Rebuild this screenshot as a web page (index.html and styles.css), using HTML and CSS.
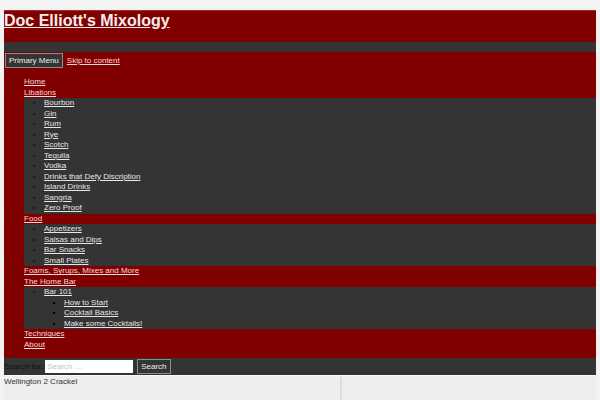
FILE: index.html
```html
<!DOCTYPE html>
<html lang="en">
<head>
<meta charset="utf-8">
<title>Doc Elliott's Mixology</title>
<link rel="stylesheet" href="styles.css">
</head>
<body>
<div class="page">
  <header class="site-header">
    <h1 class="site-title"><a href="#">Doc Elliott's Mixology</a></h1>
  </header>
  <div class="header-bar"></div>
  <nav class="main-nav">
    <div class="nav-top">
      <button class="menu-toggle">Primary Menu</button>
      <a class="skip-link" href="#">Skip to content</a>
    </div>
    <ul class="menu">
      <li><a href="#">Home</a></li>
      <li><a href="#">Libations</a>
        <ul class="sub-menu">
          <li><a href="#">Bourbon</a></li>
          <li><a href="#">Gin</a></li>
          <li><a href="#">Rum</a></li>
          <li><a href="#">Rye</a></li>
          <li><a href="#">Scotch</a></li>
          <li><a href="#">Tequila</a></li>
          <li><a href="#">Vodka</a></li>
          <li><a href="#">Drinks that Defy Discription</a></li>
          <li><a href="#">Island Drinks</a></li>
          <li><a href="#">Sangria</a></li>
          <li><a href="#">Zero Proof</a></li>
        </ul>
      </li>
      <li><a href="#">Food</a>
        <ul class="sub-menu">
          <li><a href="#">Appetizers</a></li>
          <li><a href="#">Salsas and Dips</a></li>
          <li><a href="#">Bar Snacks</a></li>
          <li><a href="#">Small Plates</a></li>
        </ul>
      </li>
      <li><a href="#">Foams, Syrups, Mixes and More</a></li>
      <li><a href="#">The Home Bar</a>
        <ul class="sub-menu">
          <li><a href="#">Bar 101</a>
            <ul class="sub-sub-menu">
              <li><a href="#">How to Start</a></li>
              <li><a href="#">Cocktail Basics</a></li>
              <li><a href="#">Make some Cocktails!</a></li>
            </ul>
          </li>
        </ul>
      </li>
      <li><a href="#">Techniques</a></li>
      <li><a href="#">About</a></li>
    </ul>
  </nav>
  <form class="search-bar">
    <label class="search-label" for="s">Search for:</label>
    <input class="search-input" id="s" type="search" placeholder="Search …">
    <button class="search-btn" type="button">Search</button>
  </form>
  <main class="content">
    <div class="col-main">Wellington 2 Crackel</div>
    <div class="col-side"></div>
  </main>
</div>
</body>
</html>
```
FILE: styles.css
```css
html, body {
  margin: 0;
  padding: 0;
}
body {
  background: #f3f3f3;
  font-family: "Liberation Sans", Arial, sans-serif;
  font-size: 8px;
}
.page {
  margin: 10px 4px 0 4px;
}
.site-header {
  background: #800000;
  border-top: 1px solid #9c3030;
  height: 31px;
}
.site-title {
  margin: 0;
  padding-top: 1px;
  font-size: 16px;
  line-height: 18px;
  font-weight: bold;
}
.site-title a {
  color: #f6ecec;
  text-decoration: underline;
}
.header-bar {
  height: 10px;
  background: #343434;
}
.main-nav {
  display: flow-root;
  background: #800000;
  padding-top: 1px;
}
.nav-top {
  display: flex;
  align-items: center;
  gap: 4px;
  margin-left: 1px;
  height: 15px;
}
.menu-toggle {
  font-family: "Liberation Sans", Arial, sans-serif;
  font-size: 8px;
  font-weight: normal;
  height: 15px;
  line-height: 13px;
  padding: 0 3px;
  margin: 0;
  background: #343434;
  color: #eeeeee;
  border: 1px solid #8c8c8c;
  border-radius: 0;
}
.skip-link {
  color: #f3d6d6;
  font-size: 8px;
}
.menu {
  margin: 9px 0 8px 0;
  padding-left: 20px;
  list-style: disc;
  line-height: 10.52px;
  color: #1a1a1a;
}
.menu a {
  color: #f5d8d8;
}
.sub-menu {
  margin: 0;
  padding-left: 20px;
  background: #343434;
  list-style: circle;
}
.sub-menu a {
  color: #e6e6e6;
}
.sub-sub-menu {
  margin: 0;
  padding-left: 20px;
  list-style: square;
  color: #000;
}
.search-bar {
  display: flex;
  align-items: center;
  height: 17px;
  margin: 0;
  background: #343434;
}
.search-label {
  color: #111;
  font-size: 8px;
  margin-right: 2px;
}
.search-input {
  width: 88px;
  height: 13px;
  box-sizing: border-box;
  border: none;
  padding: 0 2px;
  margin: 0;
  font-family: "Liberation Sans", Arial, sans-serif;
  font-size: 8px;
  background: #fff;
}
.search-input::placeholder {
  color: #c4c4c4;
}
.search-btn {
  margin-left: 4px;
  height: 15px;
  line-height: 13px;
  padding: 0 3px;
  font-family: "Liberation Sans", Arial, sans-serif;
  font-size: 8px;
  font-weight: normal;
  background: #343434;
  color: #eeeeee;
  border: 1px solid #8c8c8c;
  border-radius: 0;
}
.content {
  display: grid;
  grid-template-columns: 336px 1fr;
  background: #eeeeee;
  border-top: 1px solid #fafafa;
  min-height: 30px;
}
.col-main {
  color: #333;
  font-size: 8px;
  line-height: 10px;
  padding-top: 1px;
}
.col-side {
  border-left: 2px solid #dcdcdc;
  margin-top: 1px;
}
```
